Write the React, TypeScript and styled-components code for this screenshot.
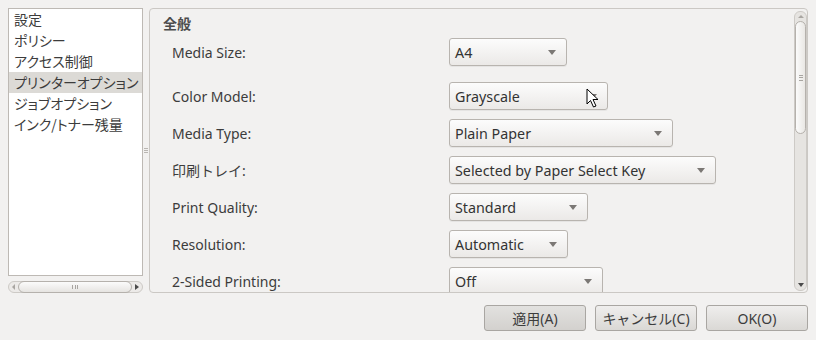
import React from 'react'
import styled, { createGlobalStyle } from 'styled-components'

const GlobalStyle = createGlobalStyle`
  html, body {
    margin: 0;
    padding: 0;
    background: #f2f1f0;
  }
  body {
    font-family: 'Noto Sans', 'Noto Sans CJK JP', sans-serif;
    color: #3c3c3c;
    font-size: 14px;
  }
`

const pages = ['設定', 'ポリシー', 'アクセス制御', 'プリンターオプション', 'ジョブオプション', 'インク/トナー残量']

const options = [
  { label: 'Media Size:', value: 'A4', width: 118 },
  { label: 'Color Model:', value: 'Grayscale', width: 159 },
  { label: 'Media Type:', value: 'Plain Paper', width: 224 },
  { label: '印刷トレイ:', value: 'Selected by Paper Select Key', width: 267 },
  { label: 'Print Quality:', value: 'Standard', width: 139 },
  { label: 'Resolution:', value: 'Automatic', width: 119 },
  { label: '2-Sided Printing:', value: 'Off', width: 154 },
]

export default function App() {
  return (
    <Window>
      <GlobalStyle />
      <Main>
        <Sidebar>
          <PageList>
            {pages.map((p, i) => (
              <PageItem key={p} $selected={i === 3}>
                {p}
              </PageItem>
            ))}
          </PageList>
          <HScroll>
            <ArrowLeft />
            <HThumb>
              <Grip />
            </HThumb>
            <ArrowRight />
          </HScroll>
        </Sidebar>
        <Splitter>
          <SplitGrip />
        </Splitter>
        <Frame>
          <Content>
            <Section>全般</Section>
            <OptionGrid>
              {options.map((o, i) => (
                <OptionRow key={o.label} $extra={i === 0}>
                  <Label>{o.label}</Label>
                  <Combo $width={o.width}>
                    <span>{o.value}</span>
                    <ComboArrow />
                  </Combo>
                </OptionRow>
              ))}
            </OptionGrid>
          </Content>
          <VScroll>
            <ArrowUp />
            <VThumb>
              <VGrip />
            </VThumb>
            <ArrowDown />
          </VScroll>
        </Frame>
      </Main>
      <Buttons>
        <Button $default>適用(A)</Button>
        <Button>キャンセル(C)</Button>
        <Button>OK(O)</Button>
      </Buttons>
      <Cursor viewBox="0 0 13 20" width="13" height="20">
        <path
          d="M1 1 L1 16 L4.5 12.5 L7.5 19 L10 18 L7 11.5 L12 11.5 Z"
          fill="#fff"
          stroke="#000"
          strokeWidth="1"
          strokeLinejoin="round"
        />
      </Cursor>
    </Window>
  )
}

const Window = styled.div`
  position: relative;
  width: 816px;
  height: 340px;
  box-sizing: border-box;
  padding: 8px 8px 0 8px;
  display: flex;
  flex-direction: column;
`

const Main = styled.div`
  display: flex;
  height: 285px;
`

const Sidebar = styled.div`
  width: 135px;
  display: flex;
  flex-direction: column;
  gap: 5px;
`

const PageList = styled.div`
  height: 268px;
  box-sizing: border-box;
  background: #fff;
  border: 1px solid #bdb9b4;
  font-family: 'Noto Sans CJK JP', sans-serif;
  font-feature-settings: 'palt';
  font-size: 14px;
`

const PageItem = styled.div<{ $selected?: boolean }>`
  height: 21px;
  line-height: 21px;
  padding-left: 5px;
  white-space: nowrap;
  overflow: hidden;
  color: #3c3c3c;
  background: ${({ $selected }) => ($selected ? '#dcdad6' : 'transparent')};
`

const HScroll = styled.div`
  height: 12px;
  box-sizing: border-box;
  border: 1px solid #cdcac6;
  border-radius: 6px;
  background: #eceae8;
  display: flex;
  align-items: center;
  padding: 0 3px;
  gap: 3px;
`

const ArrowLeft = styled.div`
  width: 0;
  height: 0;
  border-top: 3px solid transparent;
  border-bottom: 3px solid transparent;
  border-right: 3px solid #a9a6a2;
`

const ArrowRight = styled.div`
  width: 0;
  height: 0;
  border-top: 3.5px solid transparent;
  border-bottom: 3.5px solid transparent;
  border-left: 4px solid #4a4a4a;
`

const HThumb = styled.div`
  flex: 1;
  height: 12px;
  box-sizing: border-box;
  border: 1px solid #b5b1ac;
  border-radius: 6px;
  background: linear-gradient(#fbfbfb, #e6e4e1);
  display: flex;
  align-items: center;
  justify-content: center;
`

const Grip = styled.div`
  width: 6px;
  height: 4px;
  background: repeating-linear-gradient(90deg, #a8a5a1 0 1px, transparent 1px 2.5px);
`

const Splitter = styled.div`
  width: 6px;
  display: flex;
  align-items: center;
  justify-content: center;
`

const SplitGrip = styled.div`
  width: 4px;
  height: 5px;
  background: repeating-linear-gradient(180deg, #b9b6b2 0 1px, transparent 1px 2px);
`

const Frame = styled.div`
  flex: 1;
  height: 285px;
  box-sizing: border-box;
  border: 1px solid #cbc8c4;
  border-radius: 4px;
  display: flex;
  overflow: hidden;
`

const Content = styled.div`
  flex: 1;
  padding: 5px 0 0 13px;
  overflow: hidden;
`

const Section = styled.div`
  font-family: 'Noto Sans CJK JP', sans-serif;
  font-weight: bold;
  font-size: 14px;
  line-height: 18px;
  color: #4c4c4c;
  margin-bottom: 6px;
`

const OptionGrid = styled.div`
  display: flex;
  flex-direction: column;
  gap: 9px;
`

const OptionRow = styled.div<{ $extra?: boolean }>`
  display: flex;
  align-items: center;
  height: 28px;
  margin-bottom: ${({ $extra }) => ($extra ? '7px' : '0')};
`

const Label = styled.div`
  width: 286px;
  flex-shrink: 0;
  padding-left: 9px;
  box-sizing: border-box;
  font-size: 14px;
  color: #3c3c3c;
  white-space: nowrap;
`

const Combo = styled.div<{ $width: number }>`
  width: ${({ $width }) => $width}px;
  flex-shrink: 0;
  height: 28px;
  box-sizing: border-box;
  border: 1px solid #b8b4af;
  border-radius: 3px;
  background: linear-gradient(#fcfcfc, #ebe9e7);
  box-shadow: 0 1px 0 rgba(0, 0, 0, 0.05);
  display: flex;
  align-items: center;
  justify-content: space-between;
  padding: 0 10px 0 5px;
  font-size: 14.3px;
  color: #333;
  white-space: nowrap;
`

const ComboArrow = styled.div`
  width: 0;
  height: 0;
  border-left: 4px solid transparent;
  border-right: 4px solid transparent;
  border-top: 5px solid #7b7875;
`

const VScroll = styled.div`
  width: 13px;
  flex-shrink: 0;
  margin: 2px 0 1px 0;
  box-sizing: border-box;
  border: 1px solid #cdcac6;
  border-radius: 6px;
  background: #e6e4e1;
  display: flex;
  flex-direction: column;
  align-items: center;
  padding: 3px 0;
  gap: 3px;
`

const ArrowUp = styled.div`
  width: 0;
  height: 0;
  border-left: 3px solid transparent;
  border-right: 3px solid transparent;
  border-bottom: 3px solid #a9a6a2;
`

const ArrowDown = styled.div`
  margin-top: auto;
  width: 0;
  height: 0;
  border-left: 3.5px solid transparent;
  border-right: 3.5px solid transparent;
  border-top: 4px solid #4a4a4a;
`

const VThumb = styled.div`
  width: 11px;
  height: 113px;
  box-sizing: border-box;
  border: 1px solid #b5b1ac;
  border-radius: 6px;
  background: linear-gradient(90deg, #fbfbfb, #e9e7e4);
  display: flex;
  align-items: center;
  justify-content: center;
`

const VGrip = styled.div`
  width: 4px;
  height: 6px;
  background: repeating-linear-gradient(180deg, #a8a5a1 0 1px, transparent 1px 2.5px);
`

const Buttons = styled.div`
  display: flex;
  justify-content: flex-end;
  gap: 9px;
  margin-top: 12px;
`

const Button = styled.div<{ $default?: boolean }>`
  width: 102px;
  height: 26px;
  box-sizing: border-box;
  border: 1px solid #a9a6a2;
  border-radius: 3px;
  background: ${({ $default }) =>
    $default ? 'linear-gradient(#e2e1df, #d3d1ce)' : 'linear-gradient(#efeeed, #dad8d5)'};
  display: flex;
  align-items: center;
  justify-content: center;
  font-family: 'Noto Sans', 'Noto Sans CJK JP', sans-serif;
  font-size: 14px;
  color: #3c3c3c;
`

const Cursor = styled.svg`
  position: absolute;
  left: 586px;
  top: 88px;
`
